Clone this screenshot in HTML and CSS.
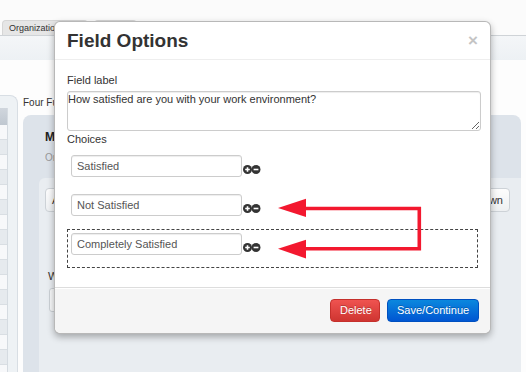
FILE: index.html
```html
<!DOCTYPE html>
<html>
<head>
<meta charset="utf-8">
<title>Field Options</title>
<link rel="stylesheet" href="styles.css">
</head>
<body>
<div class="page">
  <div class="topstrip"></div>
  <div class="tabs">
    <div class="tab tab-active">Organization</div>
    <div class="tab tab-other"></div>
  </div>
  <div class="subbar"></div>
  <div class="main">
    <aside class="sidebar">
      <div class="sidetable">
        <div class="sthead"></div>
        <div class="strow"></div>
        <div class="strow alt"></div>
        <div class="strow"></div>
        <div class="strow alt"></div>
        <div class="strow"></div>
        <div class="strow alt"></div>
        <div class="strow"></div>
        <div class="strow alt"></div>
        <div class="strow"></div>
        <div class="strow alt"></div>
        <div class="strow"></div>
        <div class="strow alt"></div>
        <div class="strow"></div>
        <div class="strow alt"></div>
        <div class="strow"></div>
        <div class="strow alt"></div>
        <div class="strow"></div>
      </div>
    </aside>
    <section class="content">
      <div class="crumb">Four Fundamentals Survey</div>
      <div class="panel">
        <h2 class="ptitle">Manage Questions</h2>
        <div class="psub">Organize your survey questions</div>
        <div class="inner">
          <div class="toolbar">
            <button class="tbtn">Add Question</button>
            <button class="tbtn">Drop Down</button>
          </div>
          <div class="wlabel">Work Environment</div>
          <div class="winput"></div>
        </div>
      </div>
    </section>
  </div>

  <div class="modal">
    <div class="modal-header">
      <h3 class="modal-title">Field Options</h3>
      <span class="close">&times;</span>
    </div>
    <div class="modal-body">
      <label class="flabel">Field label</label>
      <textarea class="ftext">How satisfied are you with your work environment?</textarea>
      <label class="flabel choices-label">Choices</label>
      <div class="choice">
        <input class="cinput" type="text" value="Satisfied">
        <svg class="pm" width="18" height="9" viewBox="0 0 18 9"><circle cx="4.5" cy="4.5" r="4.5" fill="#333"/><path d="M2.2 4.5h4.6M4.5 2.2v4.6" stroke="#fff" stroke-width="1.6"/><circle cx="13" cy="4.5" r="4.5" fill="#333"/><path d="M10.6 4.5h4.8" stroke="#fff" stroke-width="1.6"/></svg>
      </div>
      <div class="choice">
        <input class="cinput" type="text" value="Not Satisfied">
        <svg class="pm" width="18" height="9" viewBox="0 0 18 9"><circle cx="4.5" cy="4.5" r="4.5" fill="#333"/><path d="M2.2 4.5h4.6M4.5 2.2v4.6" stroke="#fff" stroke-width="1.6"/><circle cx="13" cy="4.5" r="4.5" fill="#333"/><path d="M10.6 4.5h4.8" stroke="#fff" stroke-width="1.6"/></svg>
      </div>
      <div class="choice choice-drag">
        <input class="cinput" type="text" value="Completely Satisfied">
        <svg class="pm" width="18" height="9" viewBox="0 0 18 9"><circle cx="4.5" cy="4.5" r="4.5" fill="#333"/><path d="M2.2 4.5h4.6M4.5 2.2v4.6" stroke="#fff" stroke-width="1.6"/><circle cx="13" cy="4.5" r="4.5" fill="#333"/><path d="M10.6 4.5h4.8" stroke="#fff" stroke-width="1.6"/></svg>
      </div>
    </div>
    <div class="modal-footer">
      <button class="btn btn-danger">Delete</button>
      <button class="btn btn-primary">Save/Continue</button>
    </div>
  </div>

  <svg class="arrows" width="526" height="372" viewBox="0 0 526 372">
    <polyline points="305,208.5 419.3,208.5 419.3,248.7 305,248.7" fill="none" stroke="#f3182f" stroke-width="3.6"/>
    <polygon points="278,208 306,198.7 306,217" fill="#f3182f"/>
    <polygon points="278,248.7 306,239.7 306,258.5" fill="#f3182f"/>
  </svg>
</div>
</body>
</html>
```

FILE: styles.css
```css
* { box-sizing: border-box; }

html, body {
  margin: 0;
  padding: 0;
  width: 526px;
  height: 372px;
  overflow: hidden;
  background: #fbfbfb;
  font-family: "Liberation Sans", Arial, sans-serif;
  color: #333;
}

.page {
  position: relative;
  width: 526px;
  height: 372px;
  display: flex;
  flex-direction: column;
}

.topstrip { height: 20px; background: #fbfbfb; }

.tabs {
  height: 15px;
  display: flex;
  gap: 6px;
  padding-left: 2px;
  background: #fbfbfb;
}
.tab {
  height: 15px;
  border: 1px solid #d6d6d6;
  border-bottom: none;
  border-radius: 4px 4px 0 0;
  background: #ececec;
  font-size: 9px;
  line-height: 14px;
  padding: 0 6px;
  color: #333;
  white-space: nowrap;
  overflow: hidden;
}
.tab-active { width: 86px; background: #e6e6e6; }
.tab-other { width: 43px; background: #f1f1f1; }

.subbar {
  height: 25px;
  border-top: 1px solid #cfd3d7;
  background: linear-gradient(#f4f6f8, #edf1f4);
}

.main {
  flex: 1;
  display: flex;
  padding-top: 35px;
  background: #fdfdfd;
  min-height: 0;
}

.sidebar {
  width: 18px;
  border: 1px solid #d8dee4;
  border-left: none;
  border-bottom: none;
  border-radius: 0 8px 0 0;
  background: #eef2f5;
  padding-top: 12px;
  overflow: hidden;
}
.sidetable {
  width: 8px;
  background: #fff;
  border-right: 1px solid #d5dbe1;
}
.sthead {
  height: 17px;
  background: linear-gradient(#d0d6dd, #bfc7d0);
}
.strow {
  height: 15px;
  background: #f7f8fa;
  border-bottom: 1px solid #d9dee3;
}
.strow.alt { background: #e6eaee; }

.content {
  flex: 1;
  margin: 0 5px 0 5px;
  display: flex;
  flex-direction: column;
}
.crumb {
  font-size: 10px;
  line-height: 16px;
  color: #333;
  margin-bottom: 4px;
  white-space: nowrap;
}
.panel {
  flex: 1;
  background: #dde3ea;
  border-radius: 8px 8px 0 0;
  padding: 14px 0 0 16px;
  display: flex;
  flex-direction: column;
}
.ptitle {
  margin: 0 0 0 6px;
  font-size: 12px;
  line-height: 16px;
  font-weight: bold;
  color: #222;
}
.psub {
  margin: 5px 0 12px 6px;
  font-size: 10px;
  line-height: 16px;
  color: #999;
}
.inner {
  flex: 1;
  background: #e9edf1;
  border-radius: 6px 0 0 0;
  padding: 10px 11px 0 6px;
}
.toolbar {
  display: flex;
  justify-content: space-between;
}
.tbtn {
  height: 24px;
  padding: 0 6px;
  border: 1px solid #cdd2d7;
  border-radius: 4px;
  background: linear-gradient(#fdfdfd, #eef0f2);
  font-family: "Liberation Sans", Arial, sans-serif;
  font-size: 11px;
  color: #333;
}
.wlabel {
  margin: 57px 0 0 3px;
  font-size: 11px;
  line-height: 14px;
  color: #333;
}
.winput {
  margin: 5px 0 0 4px;
  height: 24px;
  width: 300px;
  border: 1px solid #ccd1d6;
  border-radius: 3px;
  background: #f7f8f9;
}

/* Modal */
.modal {
  position: absolute;
  left: 54px;
  top: 21px;
  width: 437px;
  background: #fff;
  border: 1px solid rgba(0, 0, 0, 0.28);
  border-radius: 6px;
  box-shadow: 0 3px 7px rgba(0, 0, 0, 0.3);
}
.modal-header {
  display: flex;
  align-items: center;
  justify-content: space-between;
  padding: 7px 12px;
  border-bottom: 1px solid #eee;
}
.modal-title {
  margin: 0;
  font-size: 19px;
  line-height: 23px;
  font-weight: bold;
  color: #333;
}
.close {
  font-size: 17px;
  line-height: 23px;
  font-weight: bold;
  color: #c4c4c4;
}
.modal-body {
  padding: 12px 12px 19px;
  display: flex;
  flex-direction: column;
}
.flabel {
  font-size: 11px;
  line-height: 16px;
  color: #333;
  margin-bottom: 3px;
}
.choices-label { margin-bottom: 4px; }
.ftext {
  display: block;
  width: 414px;
  height: 40px;
  margin: 0;
  padding: 0;
  border: 1px solid #ccc;
  border-radius: 3px;
  box-shadow: inset 0 1px 1px rgba(0, 0, 0, 0.075);
  font-family: "Liberation Sans", Arial, sans-serif;
  font-size: 11px;
  line-height: 14px;
  color: #333;
  resize: vertical;
}
.choice {
  display: flex;
  align-items: flex-start;
  padding: 3px;
  border: 1px dashed transparent;
}
.choice-drag { border-color: #444; }
.cinput {
  width: 171px;
  height: 22px;
  margin: 0 0 9px 0;
  padding: 0 5px;
  border: 1px solid #ccc;
  border-radius: 3px;
  box-shadow: inset 0 1px 1px rgba(0, 0, 0, 0.075);
  font-family: "Liberation Sans", Arial, sans-serif;
  font-size: 11px;
  color: #555;
  background: #fff;
}
.pm {
  display: block;
  margin: 10px 0 0 1px;
}
.modal-footer {
  display: flex;
  justify-content: flex-end;
  gap: 7px;
  padding: 11px 11px 11px 12px;
  background: #f5f5f5;
  border-top: 1px solid #ddd;
  border-radius: 0 0 6px 6px;
  box-shadow: inset 0 1px 0 #fff;
}
.btn {
  height: 23px;
  padding: 0 9px;
  border-radius: 4px;
  font-family: "Liberation Sans", Arial, sans-serif;
  font-size: 11px;
  line-height: 21px;
  color: #fff;
  text-shadow: 0 -1px 0 rgba(0, 0, 0, 0.25);
  cursor: pointer;
}
.btn-danger {
  width: 50px;
  border: 1px solid #c5302c;
  background: linear-gradient(#ef5350, #cf3531);
}
.btn-primary {
  width: 92px;
  border: 1px solid #0050c0;
  background: linear-gradient(#0b88de, #0056d2);
}

.arrows {
  position: absolute;
  left: 0;
  top: 0;
  pointer-events: none;
}
```
